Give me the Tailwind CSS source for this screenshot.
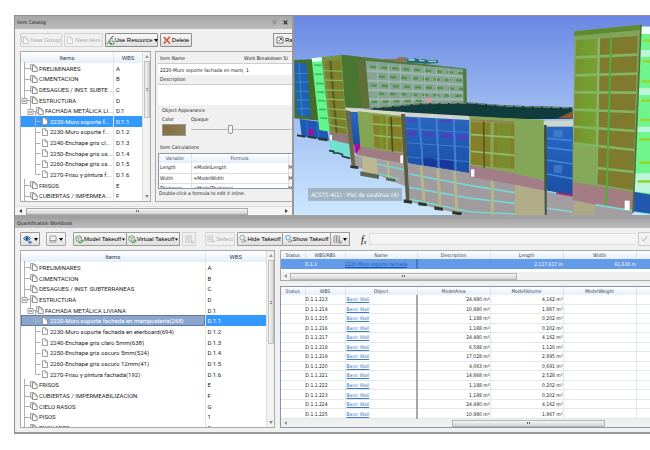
<!DOCTYPE html>
<html lang="en">
<head>
  <meta charset="UTF-8">
  <title>Quantification Workbook</title>
  <script src="https://cdn.jsdelivr.net/npm/@tailwindcss/browser@4"></script>
</head>
<body class="bg-white pl-[14px] pt-[15px] font-['DejaVu_Sans_Condensed','DejaVu_Sans',sans-serif] text-[5px] leading-[9px] text-[#222]">

  <!-- Shared icons -->
  <svg class="hidden">
    <symbol id="i-group" viewBox="0 0 8 8"><path d="M.5 .5h3.5v5.5h-3.5z" fill="#e8e8e8" stroke="#888" stroke-width=".7"/><path d="M2.5 1.7h2.8l1.9 1.8v4h-4.7z" fill="#fff" stroke="#777" stroke-width=".8"/><path d="M5.2 1.7v2h2" fill="none" stroke="#777" stroke-width=".6"/></symbol>
    <symbol id="i-item" viewBox="0 0 8 8"><path d="M1.5 .8h3l2 2v4.7h-5z" fill="#fff" stroke="#888" stroke-width=".8"/><path d="M4.4 .8v2.2h2.1" fill="none" stroke="#888" stroke-width=".7"/></symbol>
    <symbol id="i-takeoff" viewBox="0 0 10 10"><path d="M1 2l3-1.5 3 1.5v4l-3 1.5-3-1.5z" fill="#dfe9df" stroke="#6a8a6a" stroke-width=".8"/><path d="M1 2l3 1.5 3-1.5M4 3.500v4" fill="none" stroke="#6a8a6a" stroke-width=".6"/><path d="M4 8c2 1.500 4 .5 4.500-1.500M9.300 7.300l-.9-1.800-1.600 1" fill="none" stroke="#2f9a3a" stroke-width="1.100"/></symbol>
    <symbol id="i-search" viewBox="0 0 10 10"><path d="M1 3.500a3 3 0 0 1 6-.3a3 3 0 0 1-6 .3z" fill="#e9eef2" stroke="#8a949c" stroke-width="1"/><path d="M4 8.500c2 .6 4 0 4.500-2.500M6 5.500l3 3" fill="none" stroke="#777" stroke-width="1"/></symbol>
    <symbol id="i-search-blue" viewBox="0 0 10 10"><path d="M1 3.500a3 3 0 0 1 6-.3a3 3 0 0 1-6 .3z" fill="#e4f2fc" stroke="#4a90c8" stroke-width="1"/><path d="M4 8.500c2 .6 4 0 4.500-2.500M6 5.500l3 3" fill="none" stroke="#777" stroke-width="1"/></symbol>
    <symbol id="i-grid" viewBox="0 0 10 10"><path d="M1 1h6v7h-6zM1 3.300h6M1 5.600h6M4 1v7" fill="#fff" stroke="#667" stroke-width=".7"/><path d="M6 6l3 3M9 6v3h-3" fill="none" stroke="#667" stroke-width=".7"/></symbol>
  </svg>

  <main class="border-t border-l border-[#8f8f8f] bg-[#f0f0f0]">

    <div class="flex border-b-4 border-[#a0a0a0]">
      <!-- Item Catalog -->
      <section class="flex w-[277px] shrink-0 flex-col overflow-hidden">
        <header class="flex h-[13px] items-center justify-between bg-linear-to-b from-[#a6a6a6] to-[#bdbdbd] pr-1 pl-[2px]">
          <h1>Item Catalog</h1>
          <div class="flex items-center gap-[6px]">
            <button aria-label="Pin"><svg class="h-[5px] w-[5px]" viewBox="0 0 5 5"><path d="M1 1h3v2h-3zM2.500 3v2" fill="none" stroke="#777" stroke-width=".6"/></svg></button>
            <button aria-label="Close"><svg class="h-[5px] w-[5px]" viewBox="0 0 5 5"><path d="M.7 .7l3.600 3.600M4.300 .7l-3.600 3.600" stroke="#222" stroke-width="1.100"/></svg></button>
          </div>
        </header>
        <div class="flex h-[22px] shrink-0 items-center gap-[2px] pl-[5px] font-['Liberation_Sans',sans-serif] text-[6px] whitespace-nowrap">
          <button disabled class="flex h-[14px] w-[42px] items-center justify-center gap-px rounded-[1px] border border-[#d2d2d2] text-[#aaa]"><svg class="h-[8px] w-[8px] shrink-0 opacity-40"><use href="#i-group"/></svg>New Group</button>
          <button disabled class="flex h-[14px] w-[39px] items-center justify-center gap-px rounded-[1px] border border-[#d2d2d2] text-[#aaa]"><svg class="h-[8px] w-[8px] shrink-0 opacity-40"><use href="#i-item"/></svg>New Item</button>
          <button class="flex h-[14px] w-[53px] items-center justify-center rounded-[1px] border border-[#8e8e8e] bg-linear-to-b from-[#f8f8f8] to-[#dedede] text-black">
            <svg class="h-[9px] w-[9px] shrink-0" viewBox="0 0 9 9"><path d="M1 8l4-6 2 1M5 2l1-1.500h2" fill="none" stroke="#777" stroke-width="1"/><path d="M2.500 8l3.500-4.500" stroke="#bbb" stroke-width="1"/><path d="M4 7.500a2 2 0 1 0 2-2.500M4 5v2.500h2" fill="none" stroke="#2f9a3a" stroke-width="1"/></svg>Use Resource<svg class="ml-px h-[3px] w-[4px] shrink-0" viewBox="0 0 4 3"><path d="M0 0h4l-2 3z"/></svg>
          </button>
          <button class="flex h-[14px] w-[32px] items-center justify-center gap-px rounded-[1px] border border-[#8e8e8e] bg-linear-to-b from-[#f8f8f8] to-[#dedede] text-black"><svg class="h-[8px] w-[8px] shrink-0" viewBox="0 0 8 8"><path d="M.8 1l6.200 6.500M7 .8l-6.200 6.700" stroke="#dc4a33" stroke-width="1.500"/></svg>Delete</button>
          <button class="ml-auto flex h-[14px] w-[19px] items-center gap-px overflow-hidden rounded-l-[1px] border border-r-0 border-[#8e8e8e] bg-linear-to-b from-[#f8f8f8] to-[#dedede] pl-[2px] text-black"><svg class="h-[8px] w-[8px] shrink-0" viewBox="0 0 8 8"><path d="M1 1h6v6h-6z" fill="#fff" stroke="#555" stroke-width=".8"/><path d="M2.500 5.500l3-3M3.500 2.500h2v2" fill="none" stroke="#555" stroke-width=".9"/></svg>Ra</button>
        </div>

        <div class="flex gap-1 pl-[5px]">
          <div class="flex h-[151px] w-[131px] shrink-0 border border-[#aaa] bg-white">
            <table class="h-[149px] flex-1 table-fixed border-collapse font-['Roboto','Noto_Sans',sans-serif] text-[6px] leading-[9px]">
              <thead class="h-[11px] bg-linear-to-b from-white to-[#e4eefa] text-[#345]">
                <tr><th class="w-[90px] border-r border-[#dde3ea] font-normal">Items</th><th class="font-normal">WBS</th></tr>
              </thead>
              <tbody id="catalog-tree"></tbody>
            </table>
            <div class="flex w-[8px] flex-col items-center border-l border-[#ddd] bg-[#f2f2f2]">
              <svg class="my-[3px] h-[3px] w-[4px]" viewBox="0 0 4 3"><path d="M0 3h4l-2-3z" fill="#999"/></svg>
              <div class="flex h-[57px] w-[6px] items-center justify-center border border-[#c0c0c0] bg-linear-to-r from-[#f5f5f5] to-[#d5d5d5]"><div class="h-[3px] w-[2px] border-y border-[#888]"></div></div>
              <svg class="mt-auto mb-[3px] h-[3px] w-[4px]" viewBox="0 0 4 3"><path d="M0 0h4l-2 3z" fill="#888"/></svg>
            </div>
          </div>

          <form class="flex h-[151px] flex-1 flex-col overflow-hidden border border-r-0 border-[#aaa] pt-[2px] pl-[2px] whitespace-nowrap">
            <div class="grid grid-cols-[85px_1fr] gap-x-px">
              <label for="item-name" class="pl-[2px]">Item Name</label>
              <label for="item-wbs">Work Breakdown St</label>
              <input id="item-name" value="2220-Muro soporte fachada en mamposteria" class="h-[12px] min-w-0 border-t border-[#ccc] bg-white pl-[2px]">
              <input id="item-wbs" value="1" class="h-[12px] min-w-0 border-t border-[#ccc] bg-white pl-[2px]">
            </div>
            <label for="item-desc" class="pl-[2px]">Description</label>
            <textarea id="item-desc" class="h-[21px] shrink-0 resize-none border-t border-[#ccc] bg-white"></textarea>
            <h2 class="pt-px pl-1">Object Appearance</h2>
            <div class="grid grid-cols-[29px_1fr] pl-1">
              <label for="item-color">Color</label>
              <label for="item-opaque">Opaque</label>
              <button id="item-color" type="button" aria-label="Color" class="h-[12px] w-[24px] border border-[#999] bg-linear-to-r from-[#85703f] to-[#8d7c55]"></button>
              <input id="item-opaque" type="range" min="0" max="100" value="35" class="mt-px h-[9px] w-[110px] appearance-none bg-transparent bg-[linear-gradient(#bbb,#bbb)] bg-[length:100%_1px] bg-center bg-no-repeat [&::-webkit-slider-thumb]:h-[9px] [&::-webkit-slider-thumb]:w-[5px] [&::-webkit-slider-thumb]:appearance-none [&::-webkit-slider-thumb]:rounded-b-[2px] [&::-webkit-slider-thumb]:border [&::-webkit-slider-thumb]:border-[#999] [&::-webkit-slider-thumb]:bg-[#f8f8f8]">
            </div>
            <h2 class="pt-[7px] pl-[2px]">Item Calculations</h2>
            <div class="mt-px h-[36px] shrink-0 overflow-hidden border border-r-0 border-[#8a96a6] bg-white">
              <table class="w-[142px] table-fixed border-collapse leading-[9px]">
                <thead class="bg-linear-to-b from-white to-[#e4eefa] text-[#456]">
                  <tr><th class="w-[32px] border-r border-[#dde3ea] font-normal">Variable</th><th class="w-[97px] border-r border-[#dde3ea] font-normal">Formula</th><th></th></tr>
                </thead>
                <tbody>
                  <tr class="h-[10px] border-b border-[#ddd]"><td class="border-r border-[#ddd] pl-px">Length</td><td class="border-r border-[#ddd] pl-[2px]">=ModelLength</td><td>M</td></tr>
                  <tr class="h-[10px] border-b border-[#ddd]"><td class="border-r border-[#ddd] pl-px">Width</td><td class="border-r border-[#ddd] pl-[2px]">=ModelWidth</td><td>M</td></tr>
                  <tr class="h-[10px]"><td class="border-r border-[#ddd] pl-px">Thickness</td><td class="border-r border-[#ddd] pl-[2px]">=ModelThickness</td><td>M</td></tr>
                </tbody>
              </table>
            </div>
            <p class="pl-px">Double-click a formula to edit it inline.</p>
          </form>
        </div>

        <!-- Horizontal scrollbar -->
        <div class="mt-auto flex h-[9px] items-center gap-[4px] border-t border-[#ddd] bg-[#f4f4f4] px-[4px]">
          <svg class="h-[4px] w-[3px]" viewBox="0 0 3 4"><path d="M3 0v4l-3-2z" fill="#444"/></svg>
          <div class="flex h-[7px] w-[222px] items-center justify-center border border-[#aaa] bg-linear-to-b from-[#f5f5f5] to-[#cfcfcf]"><div class="h-[2px] w-[3px] border-x border-[#666]"></div></div>
          <svg class="ml-auto h-[4px] w-[3px]" viewBox="0 0 3 4"><path d="M0 0v4l3-2z" fill="#444"/></svg>
        </div>
      </section>

      <!-- Model viewer -->
      <section class="relative h-[199px] flex-1 overflow-hidden border-l-2 border-[#999]">
        <svg id="model" class="h-full w-full" viewBox="9 18 1071 597" preserveAspectRatio="xMinYMin slice">
          <defs>
            <linearGradient id="sky" x1="0" y1="0" x2="0" y2="1"><stop offset="0" stop-color="#6684e2"/><stop offset=".5" stop-color="#a2bff2"/><stop offset="1" stop-color="#cfeaff"/></linearGradient>
            <linearGradient id="blue" x1="0" y1="0" x2="0" y2="1"><stop offset="0" stop-color="#2967c2"/><stop offset="1" stop-color="#1c4fa6"/></linearGradient>
            <linearGradient id="lime" x1="0" y1="0" x2="1" y2="0"><stop offset="0" stop-color="#7f8a2e"/><stop offset=".5" stop-color="#6fa02e"/><stop offset="1" stop-color="#7f9a38"/></linearGradient>
          </defs>
          <rect x="0" y="0" width="1100" height="640" fill="url(#sky)"/>

          <!-- left wing -->
          <path d="M10 150L65 148L88 332L10 325z" fill="#437028"/>
          <path d="M10 158L46 160L60 322L18 316z" fill="#1f62b4"/>
          <path d="M24 158L34 318M12 190H50M14 216H53M16 244H54M17 270H56M18 296H58" stroke="#4b9ad0" stroke-width="2" fill="none"/>
          <path d="M26 327L106 338L114 392L32 378z" fill="#1d58b4"/>
          <path d="M45 330L52 380M78 334L84 386" stroke="#3f86cc" stroke-width="2"/>
          <path d="M52 358h16v17h-16z" fill="#a0109c"/>
          <path d="M18 373l25 4v6l-25-4zM50 377l25 4v6l-25-4zM82 382l27 4v8l-27-4z" fill="#263a34"/>
          <path d="M62 145L92 142L116 365L85 360z" fill="#66f58c"/>
          <path d="M62 145L92 142L93 154L64 155z" fill="#e8fff4"/>
          <path d="M70 165l22 1M72 192l22 1M75 220l22 1M78 246l22 1M81 272l22 1M84 298l22 1M87 324l22 1" stroke="#31c06a" stroke-width="5"/>
          <path d="M92 142L152 134L172 392L116 366z" fill="#76913f"/>
          <path d="M102 155L148 150L166 376L122 358z" fill="#7d7f2c"/>
          <path d="M118 152L138 378" stroke="#5c5d22" stroke-width="7"/>
          <path d="M96 182l58 2M98 210l58 2M101 240l58 1M105 267l56 3M108 296l55 4M111 322l55 6M114 345l55 10" stroke="#82b85a" stroke-width="4"/>
          <path d="M115 366L200 378L202 412L117 388z" fill="#93797b"/>
          <path d="M117 375h6v14h-6z" fill="#fff"/>
          <path d="M114 390L175 402L178 440L116 422z" fill="#74e0cf"/>
          <path d="M114 422l14 2v5h12l14 4v6l24 6" stroke="#20403c" stroke-width="5" fill="none"/>

          <!-- rear block -->
          <path d="M152 134L526 176L528 280L240 296L163 292z" fill="#507a38"/>
          <path d="M152 134L210 142L226 294L163 292z" fill="#48752f"/>
          <path d="M196 148L224 152L236 292L210 294z" fill="#5e6f37"/>
          <path d="M224 152L516 178L518 280L236 294z" fill="#86a391"/>
          <path d="M228 182L516 200M230 212L516 224M232 240L516 248M234 268L516 268" stroke="#9db6b0" stroke-width="7"/>
          <path d="M238 170L516 190M264 200L516 212M240 226L516 237M262 251L516 258M242 276L400 272" stroke="#4f9248" stroke-width="7" stroke-dasharray="18 15"/>
          <path d="M258 160L262 290M292 162L296 288M328 165L331 286M364 168L366 284M400 171L402 282M436 174L438 280M474 176L476 280" stroke="#a0b8b2" stroke-width="3"/>
          <path d="M404 263h18v14h-18z" fill="#cf9aa0"/>
          <path d="M210 140L345 158L345 142L322 141L318 147L270 147z" fill="#8a7550"/>
          <path d="M345 145l18 4 10-5 12 6 14-3 10 4 32-1v9l-38 2-30-3-25 0z" fill="#2d6668"/>
          <path d="M352 150h20M385 152h16M412 154h24" stroke="#7fe0e0" stroke-width="4"/>

          <!-- roof -->
          <path d="M218 296L390 280L540 278L640 286L845 292V326L700 328L540 320L330 310z" fill="#103c3e"/>
          <path d="M225 296L390 281L540 279L640 288L845 294" fill="none" stroke="#7a8a72" stroke-width="4" stroke-dasharray="22 6"/>
          <path d="M800 325l45-22v22z" fill="#8a5a2c"/>

          <!-- front left -->
          <path d="M163 293L200 296L340 306L340 318L163 303z" fill="#d9d6c2"/>
          <path d="M175 306L200 306L210 404L186 402z" fill="url(#blue)"/>
          <path d="M190 402h19l1 29-19-3z" fill="#a5109e"/>
          <path d="M200 304L334 318L338 430L208 412z" fill="#83a554"/>
          <path d="M245 315L285 319V418L250 412zM290 320L330 322L334 426L291 418z" fill="#858026"/>
          <path d="M265 316h12v100h-12z" fill="#76942f"/>
          <path d="M245 342L331 348M247 376L333 384" stroke="#8fbb60" stroke-width="5"/>
          <path d="M300 320L306 450" stroke="#4a521e" stroke-width="5"/>
          <path d="M210 410L336 430L340 462L194 434z" fill="#9e7d80"/>
          <path d="M328 436h8v24h-8z" fill="#fff"/>
          <path d="M190 436L342 462L346 530L262 495L192 468z" fill="#a49fa0"/>
          <path d="M258 462L342 480M262 490L325 508" stroke="#70dcd0" stroke-width="4"/>
          <path d="M290 455l4 50" stroke="#b9c08e" stroke-width="6"/>
          <path d="M212 438L256 446L262 492L216 486z" fill="#bcb890"/>
          <path d="M208 484l56 10v13l-56-10zM285 502l28 6v8l-28-5z" fill="#5f6350"/>
          <path d="M163 300L178 304L194 472L182 472z" fill="#6b6849"/>
          <path d="M178 466l24 3v8l-24-3z" fill="#2a3630"/>

          <!-- front centre -->
          <path d="M338 318L535 326V490L350 460z" fill="url(#blue)"/>
          <path d="M342 355L535 368M344 398L535 412M348 440L535 455" stroke="#3e7ed0" stroke-width="3"/>
          <path d="M384 320L396 468M436 322L444 476M488 324L494 484" stroke="#457fd0" stroke-width="6"/>
          <path d="M348 360l28 6v14l-27-4zM398 364l34 4v14l-34-5zM448 368l36 4v14l-36-4zM496 374l36 4v14l-36-4zM348 328h28v8h-28zM448 330h34v8h-34z" fill="#5a38bc" opacity=".65"/>
          <path d="M396 440l40 6v26l-38-6zM446 448l42 6v24l-42-6z" fill="#152f96" opacity=".7"/>
          <path d="M328 306L535 318V330L328 319z" fill="#d0d4cc"/>
          <path d="M350 460L540 490L760 535V620H540L356 575z" fill="#a29b9e"/>
          <path d="M355 492L540 527L672 548M355 532L540 565L672 580M358 568L540 606L672 612" fill="none" stroke="#74d9d6" stroke-width="5"/>
          <path d="M390 468L400 580M440 476L448 594M490 484L498 606M604 500V620" stroke="#b5b58a" stroke-width="9"/>
          <path d="M330 312L342 312L356 575L345 575z" fill="#5b5a42"/>
          <path d="M338 568l25 4v9l-25-3zM382 576l25 4v9l-25-3zM430 589l26 4v9l-26-3zM484 603l28 4v9l-28-3z" fill="#2e3430"/>

          <!-- front right -->
          <path d="M536 318L762 330V512L536 468z" fill="#83a758"/>
          <path d="M540 335L598 338V470L540 462zM610 338L670 341V477L606 470z" fill="#857f2a"/>
          <path d="M618 340h42v134h-42z" fill="#729632" opacity=".6"/>
          <path d="M540 330L670 337" stroke="#a07a50" stroke-width="5"/>
          <path d="M540 374L670 382M540 424L670 436" stroke="#8fbf6a" stroke-width="5"/>
          <path d="M578 335L580 505" stroke="#4a521e" stroke-width="4"/>
          <path d="M536 466L670 490L762 512V542L670 524L536 500z" fill="#a27c86"/>
          <path d="M540 478h10v22h-10z" fill="#fff"/>
          <path d="M672 524L760 542V620H672z" fill="#b0ad88"/>
          <path d="M764 348H846V556L766 542z" fill="url(#blue)"/>
          <path d="M768 385L845 392M768 412L845 422M768 450L845 462M768 492L845 506" stroke="#3f88d6" stroke-width="5"/>
          <path d="M788 360h26v22h-26zM788 465h26v24h-26z" fill="#4e8bd0" opacity=".6"/>
          <path d="M764 544L846 558V620H764z" fill="#a39ca0"/>
          <path d="M766 544l30 5M766 594l80 12" stroke="#7fd6d4" stroke-width="5"/>
          <path d="M796 549l50 8" stroke="#b0186c" stroke-width="5"/>
          <path d="M758 332H846V350H758z" fill="#cdd8cc"/>
          <path d="M759 345L767 345V620H761z" fill="#45503a"/>

          <!-- tower -->
          <path d="M850 64L1050 44L1026 610L845 572z" fill="#7fa45a"/>
          <path d="M850 64L1050 44L1046 60L850 78z" fill="#5f8a30"/>
          <path d="M856 90L920 86L918 408L848 396z" fill="url(#lime)"/>
          <path d="M926 86L1040 78L1026 540L918 522z" fill="#7f7a2e"/>
          <path d="M924 84L916 525" stroke="#84b86a" stroke-width="7"/>
          <path d="M854 142L1040 134M853 196L1038 191M852 247L1036 248M851 299L1034 306M850 350L1032 363M848 400L1030 420M918 474L1028 486" stroke="#83b563" stroke-width="8"/>
          <path d="M845 402L918 412V530L845 516z" fill="#84a95a"/>
          <path d="M845 516L1026 546L1024 604L845 572z" fill="#a37c84"/>
          <path d="M845 570L914 584L1024 606V620H845z" fill="#a39ca0"/>
          <path d="M914 584L1080 612" stroke="#79dad8" stroke-width="5"/>
          <path d="M848 572L912 584V620H848z" fill="#aba986"/>
          <path d="M960 82L946 588" stroke="#4fae3f" stroke-width="6"/>
          <path d="M1001 572h15v28h-15z" fill="#fff"/>
          <path d="M1048 50L1090 50V560L1028 545z" fill="#6ef58c"/>
          <path d="M1048 50L1090 50V72L1048 72z" fill="#effff8"/>
          <path d="M1045 120H1090V140H1044zM1042 235H1090V255H1041zM1038 350H1090V366H1037zM1030 490H1090V550L1028 545z" fill="#bdf5dc"/>
          <path d="M1058 92H1090M1055 154H1090M1052 214H1090M1050 272H1090M1048 330H1090M1045 388H1090M1043 458H1090M1040 514H1090" stroke="#94d838" stroke-width="8"/>
          <path d="M1028 545L1090 556V612L1026 604z" fill="#2158ae"/>
          <path d="M1050 44L1026 608" stroke="#4f6e38" stroke-width="5"/>
        </svg>
        <div class="absolute bottom-[14px] left-[14px] border border-[#a5b6c4] bg-[#98a8b4]/80 px-[2px] text-[6px] leading-[11px] text-white/90">ACSTS-4(1) : Ploi de sautinas (4)</div>
      </section>
    </div>

    <!-- Quantification Workbook -->
    <section class="border-b-2 border-[#999] pb-[4px]">
      <header class="flex h-[9px] items-center bg-linear-to-b from-[#a6a6a6] to-[#bdbdbd] pl-[2px]"><h1>Quantification Workbook</h1></header>
      <div class="flex h-[22px] items-center pl-[5px] font-['Liberation_Sans',sans-serif] text-[6px] whitespace-nowrap text-black">
        <button aria-label="View" class="mr-[6px] flex h-[14px] w-[20px] items-center justify-center gap-[2px] rounded-[1px] border border-[#999] bg-linear-to-b from-[#f8f8f8] to-[#dedede]"><svg class="h-[9px] w-[9px]" viewBox="0 0 9 9"><path d="M.5 3.500q3.500-4 7 0q-3.500 4-7 0z" fill="#cfe4f5" stroke="#245a94" stroke-width="1"/><circle cx="4" cy="3.500" r="1.500" fill="#1d4f88"/><path d="M5.500 6h3v2.500h-3z" fill="#4a7ebb"/></svg><svg class="h-[3px] w-[4px]" viewBox="0 0 4 3"><path d="M0 0h4l-2 3z"/></svg></button>
        <button aria-label="Report" class="mr-[7px] flex h-[14px] w-[20px] items-center justify-center gap-[2px] rounded-[1px] border border-[#aaa] bg-linear-to-b from-[#f8f8f8] to-[#e4e4e4]"><svg class="h-[8px] w-[8px]" viewBox="0 0 8 8"><path d="M1 1h6v6h-6z" fill="#f4f4f4" stroke="#888" stroke-width=".8"/><path d="M1 5.500h6" stroke="#888" stroke-width=".8"/></svg><svg class="h-[3px] w-[4px]" viewBox="0 0 4 3"><path d="M0 0h4l-2 3z"/></svg></button>
        <button class="flex h-[14px] w-[54px] items-center justify-center rounded-l-[1px] border border-[#999] bg-linear-to-b from-[#f8f8f8] to-[#dedede]"><svg class="h-[9px] w-[9px] shrink-0"><use href="#i-takeoff"/></svg>Model Takeoff<svg class="ml-px h-[3px] w-[3px] shrink-0" viewBox="0 0 4 3"><path d="M0 0h4l-2 3z"/></svg></button>
        <button class="mr-[2px] flex h-[14px] w-[53px] items-center justify-center rounded-r-[1px] border border-l-0 border-[#999] bg-linear-to-b from-[#f8f8f8] to-[#dedede]"><svg class="h-[9px] w-[9px] shrink-0"><use href="#i-takeoff"/></svg>Virtual Takeoff<svg class="ml-px h-[3px] w-[3px] shrink-0" viewBox="0 0 4 3"><path d="M0 0h4l-2 3z"/></svg></button>
        <button disabled aria-label="Update" class="mr-[9px] flex h-[14px] w-[14px] items-center justify-center border border-[#d2d2d2]"><svg class="h-[9px] w-[9px] opacity-40"><use href="#i-grid"/></svg></button>
        <button disabled class="mr-[2px] flex h-[14px] w-[30px] items-center justify-center gap-px border border-[#d2d2d2] text-[#aaa]"><svg class="h-[8px] w-[8px] shrink-0 opacity-40"><use href="#i-grid"/></svg>Select</button>
        <button class="flex h-[14px] w-[46px] items-center justify-center rounded-l-[1px] border border-[#999] bg-linear-to-b from-[#f8f8f8] to-[#dedede]"><svg class="h-[8px] w-[8px] shrink-0"><use href="#i-search"/></svg>Hide Takeoff</button>
        <button class="flex h-[14px] w-[48px] items-center justify-center border border-l-0 border-[#999] bg-linear-to-b from-[#f8f8f8] to-[#dedede]"><svg class="h-[8px] w-[8px] shrink-0"><use href="#i-search-blue"/></svg>Show Takeoff</button>
        <button aria-label="Columns" class="mr-[11px] flex h-[14px] w-[19px] items-center justify-center gap-px rounded-r-[1px] border border-l-0 border-[#999] bg-linear-to-b from-[#f8f8f8] to-[#dedede]"><svg class="h-[9px] w-[9px]"><use href="#i-grid"/></svg><svg class="h-[3px] w-[4px]" viewBox="0 0 4 3"><path d="M0 0h4l-2 3z"/></svg></button>
        <label for="formula" class="mr-[3px] font-['Liberation_Serif',serif] text-[10px] italic">f<sub class="text-[6px]">x</sub></label>
        <input id="formula" class="h-[12px] min-w-0 flex-1 border border-r-0 border-[#ddd] bg-[#f4f4f4]">
        <button disabled aria-label="Accept" class="ml-[2px] flex h-[14px] w-[12px] items-center justify-center border border-r-0 border-[#ccc]"><svg class="h-[6px] w-[7px]" viewBox="0 0 7 6"><path d="M1 3.500l1.500 1.500 3.500-4.500" fill="none" stroke="#aaa" stroke-width="1"/></svg></button>
      </div>

      <div class="flex gap-[5px] pl-[5px]">
        <div class="flex h-[178px] w-[255px] shrink-0 overflow-hidden border border-[#aaa] bg-white">
          <table class="h-[182px] flex-1 table-fixed border-collapse font-['Roboto','Noto_Sans',sans-serif] text-[6px] leading-[9px]">
            <thead class="h-[11px] bg-linear-to-b from-white to-[#e4eefa] text-[#345]">
              <tr><th class="w-[184px] border-r border-[#dde3ea] font-normal">Items</th><th class="font-normal">WBS</th></tr>
            </thead>
            <tbody id="workbook-tree"></tbody>
          </table>
          <div class="flex w-[8px] flex-col items-center border-l border-[#ddd] bg-[#f2f2f2]">
            <svg class="my-[3px] h-[3px] w-[4px]" viewBox="0 0 4 3"><path d="M0 3h4l-2-3z" fill="#999"/></svg>
            <div class="flex h-[84px] w-[6px] items-center justify-center border border-[#c0c0c0] bg-linear-to-r from-[#f5f5f5] to-[#d5d5d5]"><div class="h-[3px] w-[2px] border-y border-[#888]"></div></div>
            <svg class="mt-auto mb-[3px] h-[3px] w-[4px]" viewBox="0 0 4 3"><path d="M0 0h4l-2 3z" fill="#888"/></svg>
          </div>
        </div>

        <div class="flex min-w-0 flex-1 flex-col gap-[5px]">
          <div class="border border-r-0 border-[#aaa] bg-white">
            <table class="w-full table-fixed border-collapse leading-[8px]">
              <thead class="bg-linear-to-b from-white to-[#e4eefa] text-[#345]">
                <tr class="h-[8px]">
                  <th class="w-[24px] border-r border-[#dde3ea] font-normal">Status</th>
                  <th class="w-[40px] border-r border-[#dde3ea] font-normal">WBS/RBS</th>
                  <th class="w-[72px] border-r border-[#dde3ea] font-normal">Name</th>
                  <th class="w-[73px] border-r border-[#dde3ea] font-normal">Description</th>
                  <th class="w-[73px] border-r border-[#dde3ea] font-normal">Length</th>
                  <th class="w-[73px] border-r border-[#dde3ea] font-normal">Width</th>
                  <th></th>
                </tr>
              </thead>
              <tbody>
                <tr class="h-[10px] bg-[#649be8] text-white">
                  <td></td><td>D.1.1</td>
                  <td class="truncate border-r-2 border-[#4a78b8]"><a href="#" class="text-[#1559c0] underline">2220-Muro soporte fachada</a></td>
                  <td></td><td class="text-right">2.117,617 m</td><td class="text-right">61,630 m</td><td></td>
                </tr>
              </tbody>
            </table>
            <div class="mt-[3px] flex h-[8px] items-center gap-[3px] bg-[#f0f0f0] pl-[3px]">
              <svg class="h-[4px] w-[3px]" viewBox="0 0 3 4"><path d="M3 0v4l-3-2z" fill="#999"/></svg>
              <div class="flex h-[7px] w-[227px] items-center justify-center border border-[#b5b5b5] bg-linear-to-b from-[#f5f5f5] to-[#d5d5d5]"><div class="h-[2px] w-[3px] border-x border-[#666]"></div></div>
            </div>
          </div>

          <div class="flex flex-1 flex-col border border-r-0 border-[#8a96a6] bg-white">
            <table class="h-[132px] w-full table-fixed border-collapse leading-[8px]">
              <thead class="bg-linear-to-b from-white to-[#e4eefa] text-[#345]">
                <tr class="h-[8px]">
                  <th class="w-[24px] border-r border-[#dde3ea] font-normal">Status</th>
                  <th class="w-[40px] border-r border-[#dde3ea] font-normal">WBS</th>
                  <th class="w-[72px] border-r border-[#dde3ea] font-normal">Object</th>
                  <th class="w-[73px] border-r border-[#dde3ea] font-normal">ModelArea</th>
                  <th class="w-[73px] border-r border-[#dde3ea] font-normal">ModelVolume</th>
                  <th class="w-[73px] border-r border-[#dde3ea] font-normal">ModelWeight</th>
                  <th></th>
                </tr>
              </thead>
              <tbody id="objects"></tbody>
            </table>
            <div class="mt-auto flex h-[8px] items-center bg-[#f0f0f0] pl-[3px]">
              <svg class="h-[4px] w-[3px]" viewBox="0 0 3 4"><path d="M3 0v4l-3-2z" fill="#999"/></svg>
              <div class="ml-[165px] flex h-[7px] w-[153px] items-center justify-center border border-[#b5b5b5] bg-linear-to-b from-[#f5f5f5] to-[#d5d5d5]"><div class="h-[2px] w-[3px] border-x border-[#666]"></div></div>
            </div>
          </div>
        </div>
      </div>
    </section>
  </main>

  <script>
    // [level, name, wbs]
    const catalog = [
      [1, 'PRELIMINARES', 'A'], [1, 'CIMENTACION', 'B'], [1, 'DESAGUES / INST. SUBTE...', 'C'], [1, 'ESTRUCTURA', 'D'],
      [2, 'FACHADA METÁLICA LI...', 'D.1'],
      [3, '2220-Muro soporte f...', 'D.1.1'], [3, '2230-Muro soporte f...', 'D.1.2'], [3, '2240-Enchape gris cl...', 'D.1.3'],
      [3, '2250-Enchape gris os...', 'D.1.4'], [3, '2260-Enchape gris os...', 'D.1.5'], [3, '2270-Friso y pintura f...', 'D.1.6'],
      [1, 'FRISOS', 'E'], [1, 'CUBIERTAS / IMPERMEA...', 'F'],
    ];
    const workbook = [
      [1, 'PRELIMINARES', 'A'], [1, 'CIMENTACION', 'B'], [1, 'DESAGUES / INST. SUBTERRANEAS', 'C'], [1, 'ESTRUCTURA', 'D'],
      [2, 'FACHADA METÁLICA LIVIANA', 'D.1'],
      [3, '2220-Muro soporte fachada en mamposteria(268)', 'D.1.1'], [3, '2230-Muro soporte fachada en eterboard(694)', 'D.1.2'],
      [3, '2240-Enchape gris claro 5mm(638)', 'D.1.3'], [3, '2250-Enchape gris oscuro 5mm(524)', 'D.1.4'],
      [3, '2260-Enchape gris oscuro 12mm(41)', 'D.1.5'], [3, '2270-Friso y pintura fachada(192)', 'D.1.6'],
      [1, 'FRISOS', 'E'], [1, 'CUBIERTAS / IMPERMEABILIZACION', 'F'], [1, 'CIELO RASOS', 'G'], [1, 'PISOS', '1'], [1, 'ENCHAPES', '2'],
    ];

    // connector lines and the row icon
    function branch(level, name, last) {
      const box = x => `<path d="M${x} 3.500h5v5h-5z" fill="#fff" stroke="#888" stroke-width=".8"/><path d="M${x + 1} 6h3" stroke="#333" stroke-width=".8"/>`;
      if (level === 3) {
        return `<svg class="h-[10px] w-[29px] shrink-0 overflow-visible" viewBox="0 0 29 10"><path d="M14.500 -1V${last ? 5.5 : 11}M14.500 5.500h5" fill="none" stroke="#b0b0b0"/><use href="#i-item" x="20" y="1" width="8" height="8"/></svg>`;
      }
      if (level === 2) {
        return `<svg class="h-[10px] w-[24px] shrink-0 overflow-visible" viewBox="0 0 24 10"><path d="M9.500 -1V5.500h6M14.500 5.500V11" fill="none" stroke="#b0b0b0"/>${box(7)}<use href="#i-group" x="15" y="1" width="8" height="8"/></svg>`;
      }
      const open = name === 'ESTRUCTURA';
      return `<svg class="h-[10px] w-[18px] shrink-0 overflow-visible" viewBox="0 0 18 10"><path d="M3.500 -1V${open ? 5.5 : 11}M3.500 5.500h6${open ? 'V11' : ''}" fill="none" stroke="#b0b0b0"/>${open ? box(1) : ''}<use href="#i-group" x="9" y="1" width="8" height="8"/></svg>`;
    }

    function renderTree(id, items, selectedCell) {
      document.getElementById(id).innerHTML = items.map(([level, name, wbs]) => {
        const selected = wbs === 'D.1.1';
        return `
          <tr class="${selected ? 'bg-[#3399ff] text-white' : 'text-[#222]'}">
            <td class="border-r border-[#e4e4e4] p-0 ${selected ? selectedCell : ''}">
              <div class="flex h-[9px] items-center overflow-visible whitespace-nowrap">${branch(level, name, wbs === 'D.1.6')}<span>${name}</span></div>
            </td>
            <td class="p-0 pl-[2px]">${wbs}</td>
          </tr>`;
      }).join('');
    }
    renderTree('catalog-tree', catalog, '');
    renderTree('workbook-tree', workbook, 'bg-[#8aa6cf] outline outline-[#5a78a8] -outline-offset-1');

    const objects = [
      ['24,480', '4,162'], ['10,980', '1,867'], ['1,188', '0,202'], ['1,188', '0,202'], ['24,480', '4,162'],
      ['6,588', '1,120'], ['17,028', '2,895'], ['4,063', '0,691'], ['14,868', '2,528'], ['1,188', '0,202'],
      ['1,188', '0,202'], ['24,480', '4,162'], ['10,980', '1,867'],
    ];
    document.getElementById('objects').innerHTML = objects.map(([area, volume], i) => `
      <tr class="border-b border-[#e2e7ed]">
        <td class="border-r border-[#e2e7ed]"></td>
        <td class="border-r border-[#e2e7ed] p-0">D.1.1.${213 + i}</td>
        <td class="border-r-2 border-r-[#a8a8a8] p-0 pl-px"><a href="#" class="text-[#3a78c8] underline">Basic Wall</a></td>
        <td class="border-r border-[#e2e7ed] p-0 text-right">${area} m²</td>
        <td class="border-r border-[#e2e7ed] p-0 text-right">${volume} m³</td>
        <td class="border-r border-[#e2e7ed]"></td>
        <td></td>
      </tr>`).join('');
  </script>
</body>
</html>
